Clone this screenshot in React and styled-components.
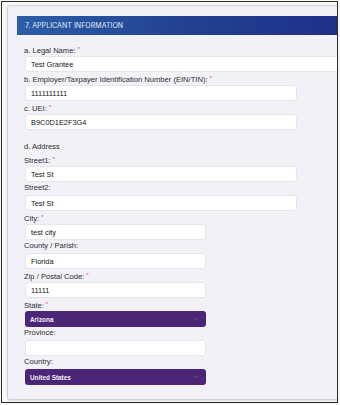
import React from "react";
import styled, { createGlobalStyle } from "styled-components";

const Global = createGlobalStyle`
  html, body { margin: 0; padding: 0; background: #f7f7f7; }
  body { font-family: "Liberation Sans", Arial, sans-serif; }
`;

const Frame = styled.div`
  box-sizing: border-box;
  width: 337px;
  height: 402px;
  margin: 1px 0 0 1px;
  border: 1px solid #2b2b2b;
  background: #f8f8f9;
  overflow: hidden;
  padding: 3px 0 0 5px;
`;

const Card = styled.div`
  box-sizing: border-box;
  width: 380px;
  height: 395px;
  background: #f2f1f7;
  border: 1px solid #d2d2d6;
  border-radius: 3px;
  box-shadow: 0 1px 2px rgba(0, 0, 0, 0.12);
  padding: 10px 0 0 9px;
`;

const Header = styled.div`
  height: 19px;
  display: flex;
  align-items: center;
  padding-left: 8px;
  background: linear-gradient(90deg, #2b5ea8 0%, #22428f 45%, #1d2a86 100%);
  color: #e4e9f6;
  font-family: Inter, Roboto, sans-serif;
  font-size: 7px;
  letter-spacing: 0.05px;
`;

const Body = styled.div`
  display: flex;
  flex-direction: column;
  padding: 9px 0 0 7px;
`;

const Label = styled.div`
  height: 10px;
  line-height: 10px;
  font-size: 7.6px;
  color: #2c2c32;
  margin-bottom: 2px;
  margin-top: ${(p) => (p.$gap ? p.$gap : 0)}px;
  white-space: nowrap;
`;

const Req = styled.span`
  color: #d9534f;
  margin-left: 2px;
  font-size: 6px;
  vertical-align: 2px;
`;

const Input = styled.div`
  box-sizing: border-box;
  width: ${(p) => p.$w}px;
  height: 16px;
  margin-left: 1px;
  margin-bottom: 1px;
  background: #ffffff;
  border: 1px solid #e6e6ea;
  border-radius: 3px;
  display: flex;
  align-items: center;
  padding-left: 5px;
  font-size: 7.4px;
  color: #141418;
`;

const Select = styled.div`
  box-sizing: border-box;
  width: ${(p) => p.$w}px;
  height: 16px;
  margin-left: 1px;
  margin-bottom: 1px;
  background: #4b2677;
  border-radius: 3px;
  display: flex;
  align-items: center;
  justify-content: space-between;
  padding: 0 7px 0 5px;
  font-size: 6.4px;
  font-weight: 700;
  color: #f2eef8;
`;

const Caret = styled.svg`
  width: 5px;
  height: 4px;
`;

const fields = [
  { label: "a. Legal Name:", req: true, value: "Test Grantee", w: 330 },
  { label: "b. Employer/Taxpayer Identification Number (EIN/TIN):", req: true, value: "1111111111", w: 272 },
  { label: "c. UEI:", req: true, value: "B9C0D1E2F3G4", w: 272 },
  { section: "d. Address", gap: 11 },
  { label: "Street1:", req: true, value: "Test St", w: 272 },
  { label: "Street2:", value: "Test St", w: 272 },
  { label: "City:", req: true, value: "test city", w: 181 },
  { label: "County / Parish:", value: "Florida", w: 181 },
  { label: "Zip / Postal Code:", req: true, value: "11111", w: 181 },
  { label: "State:", req: true, value: "Arizona", w: 181, select: true },
  { label: "Province:", value: "", w: 181 },
  { label: "Country:", value: "United States", w: 181, select: true },
];

export default function App() {
  return (
    <>
      <Global />
      <Frame>
        <Card>
          <Header>7. APPLICANT INFORMATION</Header>
          <Body>
            {fields.map((f, i) =>
              f.section ? (
                <Label key={i} $gap={f.gap}>{f.section}</Label>
              ) : (
                <React.Fragment key={i}>
                  <Label>
                    {f.label}
                    {f.req && <Req>*</Req>}
                  </Label>
                  {f.select ? (
                    <Select $w={f.w}>
                      <span>{f.value}</span>
                      <Caret viewBox="0 0 5 4">
                        <path d="M0.5 1 L2.5 3 L4.5 1" fill="none" stroke="#6e5690" strokeWidth="0.8" />
                      </Caret>
                    </Select>
                  ) : (
                    <Input $w={f.w}>{f.value}</Input>
                  )}
                </React.Fragment>
              )
            )}
          </Body>
        </Card>
      </Frame>
    </>
  );
}
